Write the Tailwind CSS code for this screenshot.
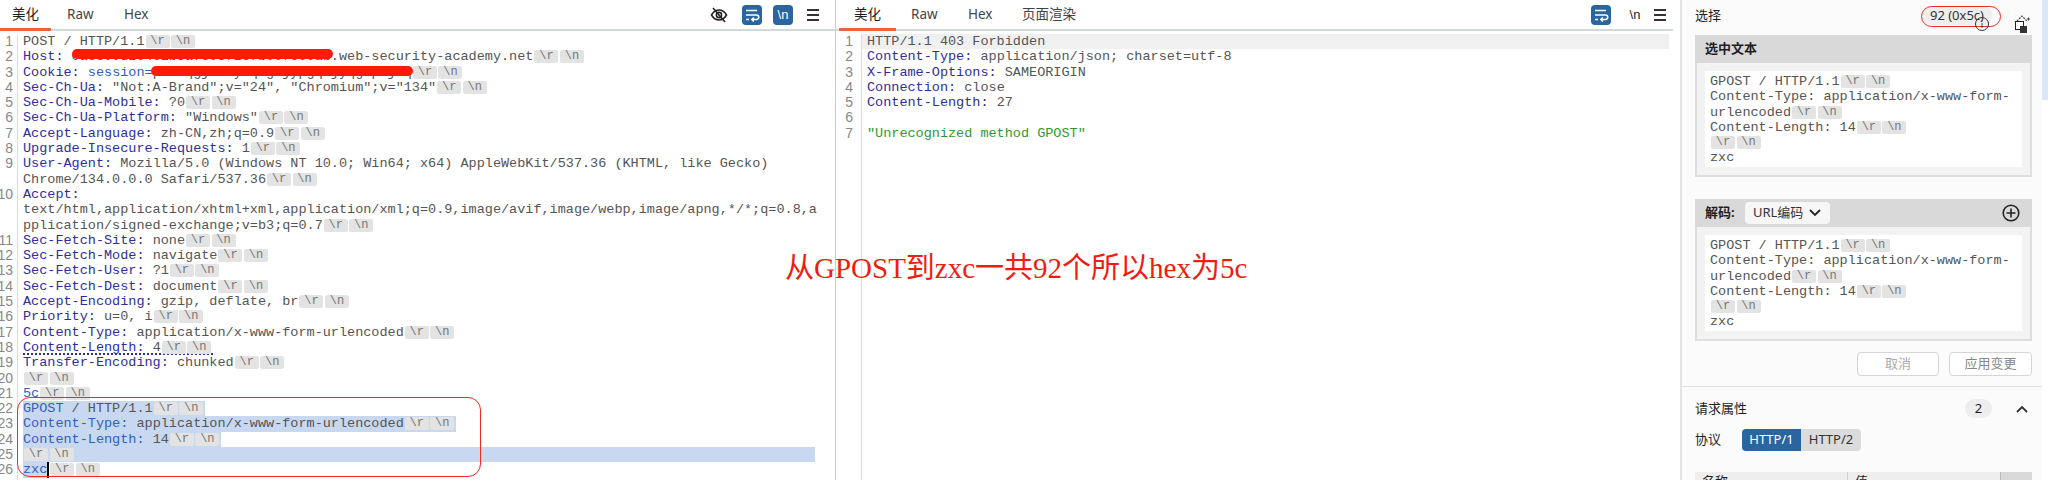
<!DOCTYPE html>
<html lang="en">
<head>
    <meta charset="UTF-8">
    <title>Repeater</title>
    <script src="https://cdn.jsdelivr.net/npm/@tailwindcss/browser@4"></script>
</head>
<body class="bg-white">
    <div class="relative flex w-[2048px] h-[480px] overflow-hidden bg-white text-[#1f1f1f] font-['Noto_Sans','Noto_Sans_CJK_SC',sans-serif]">

        <!-- Request pane -->
        <div class="w-[836px] h-full flex flex-col border-r border-[#c8cdcd] shrink-0">
            <div class="h-[31px] flex items-center border-b-2 border-[#d3d8d8] shrink-0 text-[13.5px] relative">
                <div class="w-[51px] h-[30px] flex items-center justify-center border-b-[3px] border-[#e8643a] -mb-[2px]">美化</div>
                <div class="ml-[16px] w-[26px] text-center text-[#444]">Raw</div>
                <div class="ml-[31px] w-[23px] text-center text-[#444]">Hex</div>
                <div class="ml-auto flex items-center pr-[16px] gap-[11px]">
                    <svg width="18" height="18" viewBox="0 0 18 18" fill="none" stroke="#222" stroke-width="1.6" class="mr-[1px]"><path d="M1.500 9c2-3.400 4.600-5 7.500-5s5.500 1.600 7.500 5c-2 3.400-4.600 5-7.500 5s-5.500-1.600-7.500-5z"/><circle cx="9" cy="9" r="2.600"/><path d="M3 2l12 14"/></svg>
                    <div class="w-[20px] h-[20px] rounded-[4px] bg-[#2a659f] flex items-center justify-center ml-[2px]">
                        <svg width="16" height="16" viewBox="0 0 16 16" fill="none" stroke="#fff" stroke-width="1.500"><path d="M2 3.500h11M2 8h10.500a1.800 1.800 0 0 1 0 4.500H8M9.800 10.500L7.800 12.500l2 2M2 12.500h3"/></svg>
                    </div>
                    <div class="w-[20px] h-[20px] rounded-[4px] bg-[#2a659f] flex items-center justify-center text-white text-[13px] leading-none font-['Liberation_Sans',sans-serif]">\n</div>
                    <div class="w-[12px] ml-[3px] flex flex-col gap-[3px]"><i class="h-[2px] bg-[#333]"></i><i class="h-[2px] bg-[#333]"></i><i class="h-[2px] bg-[#333]"></i></div>
                </div>
            </div>
            <div class="flex-1 flex font-['Liberation_Mono',monospace] text-[13.5px] leading-[15.3px] pt-[3px] text-[#555] overflow-hidden">
                <div class="w-[18px] shrink-0 border-r border-[#d9dcdc] text-[#888] font-['Liberation_Sans',sans-serif] text-[14px] overflow-hidden">
                    <div class="w-[13px] flex flex-col items-end whitespace-nowrap">
                        <span>1</span><span>2</span><span>3</span><span>4</span><span>5</span><span>6</span><span>7</span><span>8</span><span class="mb-[15.3px]">9</span><span class="mb-[30.6px]">10</span><span>11</span><span>12</span><span>13</span><span>14</span><span>15</span><span>16</span><span>17</span><span>18</span><span>19</span><span>20</span><span>21</span><span>22</span><span>23</span><span>24</span><span>25</span><span>26</span>
                    </div>
                </div>
                <div class="flex-1 pl-[5px] [&>div]:whitespace-pre [&>div]:h-[15.3px] [&_b]:font-normal [&_b]:text-[#2b2f9e] [&_i]:not-italic [&_i]:inline-block [&_i]:w-[24px] [&_i]:h-[13px] [&_i]:leading-[13px] [&_i]:mr-[1.500px] [&_i]:text-center [&_i]:text-[12px] [&_i]:bg-[#e3e3e3] [&_i]:text-[#777] [&_i]:rounded-[2px] [&_i]:align-[1px]">
                    <div>POST / HTTP/1.1<i class="ml-[1px]">\r</i><i>\n</i></div>
                    <div><b>Host:</b> 0a8c00d204e1b5a7803f2c7b00f600ab.web-security-academy.net<i class="ml-[1px]">\r</i><i>\n</i></div>
                    <div><b>Cookie:</b> <b class="text-[#2f5fc4]!">session=</b>pY3kqgjZr7yTqLg2jypgqVjyqgWp9jXq<i class="ml-[1px]">\r</i><i>\n</i></div>
                    <div><b>Sec-Ch-Ua:</b> "Not:A-Brand";v="24", "Chromium";v="134"<i class="ml-[1px]">\r</i><i>\n</i></div>
                    <div><b>Sec-Ch-Ua-Mobile:</b> ?0<i class="ml-[1px]">\r</i><i>\n</i></div>
                    <div><b>Sec-Ch-Ua-Platform:</b> "Windows"<i class="ml-[1px]">\r</i><i>\n</i></div>
                    <div><b>Accept-Language:</b> zh-CN,zh;q=0.9<i class="ml-[1px]">\r</i><i>\n</i></div>
                    <div><b>Upgrade-Insecure-Requests:</b> 1<i class="ml-[1px]">\r</i><i>\n</i></div>
                    <div><b>User-Agent:</b> Mozilla/5.0 (Windows NT 10.0; Win64; x64) AppleWebKit/537.36 (KHTML, like Gecko)</div>
                    <div>Chrome/134.0.0.0 Safari/537.36<i class="ml-[1px]">\r</i><i>\n</i></div>
                    <div><b>Accept:</b></div>
                    <div>text/html,application/xhtml+xml,application/xml;q=0.9,image/avif,image/webp,image/apng,*/*;q=0.8,a</div>
                    <div>pplication/signed-exchange;v=b3;q=0.7<i class="ml-[1px]">\r</i><i>\n</i></div>
                    <div><b>Sec-Fetch-Site:</b> none<i class="ml-[1px]">\r</i><i>\n</i></div>
                    <div><b>Sec-Fetch-Mode:</b> navigate<i class="ml-[1px]">\r</i><i>\n</i></div>
                    <div><b>Sec-Fetch-User:</b> ?1<i class="ml-[1px]">\r</i><i>\n</i></div>
                    <div><b>Sec-Fetch-Dest:</b> document<i class="ml-[1px]">\r</i><i>\n</i></div>
                    <div><b>Accept-Encoding:</b> gzip, deflate, br<i class="ml-[1px]">\r</i><i>\n</i></div>
                    <div><b>Priority:</b> u=0, i<i class="ml-[1px]">\r</i><i>\n</i></div>
                    <div><b>Content-Type:</b> application/x-www-form-urlencoded<i class="ml-[1px]">\r</i><i>\n</i></div>
                    <div><span class="inline-block h-[15.3px] border-b-2 border-dotted border-[#2b2f9e]"><b>Content-Length:</b> 4<i class="ml-[1px]">\r</i><i>\n</i></span></div>
                    <div><b>Transfer-Encoding:</b> chunked<i class="ml-[1px]">\r</i><i>\n</i></div>
                    <div><i class="ml-[1px]">\r</i><i>\n</i></div>
                    <div><span class="text-[#2f5fc4]">5c</span><i class="ml-[1px]">\r</i><i>\n</i></div>
                    <div class="w-fit bg-[#c7d8f0]"><b class="text-[#2f5fc4]!">GPOST</b> / HTTP/1.1<i class="ml-[1px]">\r</i><i>\n</i></div>
                    <div class="w-fit bg-[#c7d8f0]"><b class="text-[#2f5fc4]!">Content-Type:</b> application/x-www-form-urlencoded<i class="ml-[1px]">\r</i><i>\n</i></div>
                    <div class="w-fit bg-[#c7d8f0]"><b class="text-[#2f5fc4]!">Content-Length:</b> 14<i class="ml-[1px]">\r</i><i>\n</i></div>
                    <div class="w-[792px] bg-[#c7d8f0]"><i class="ml-[1px]">\r</i><i>\n</i></div>
                    <div><span class="inline-block h-[15.3px] bg-[#c7d8f0] text-[#2f5fc4] border-r-2 border-black">zxc</span><i class="ml-[1px]">\r</i><i>\n</i></div>
                </div>
            </div>
        </div>

        <!-- Response pane -->
        <div class="w-[837px] h-full flex flex-col shrink-0">
            <div class="h-[31px] flex items-center border-b-2 border-[#d3d8d8] shrink-0 text-[13.5px] pl-[3px]">
                <div class="w-[57px] h-[30px] flex items-center justify-center border-b-[3px] border-[#e8643a] -mb-[2px]">美化</div>
                <div class="ml-[15px] w-[26px] text-center text-[#444]">Raw</div>
                <div class="ml-[31px] w-[24px] text-center text-[#444]">Hex</div>
                <div class="ml-[30px] text-[#444]">页面渲染</div>
                <div class="ml-auto flex items-center pr-[7px]">
                    <div class="w-[20px] h-[20px] rounded-[4px] bg-[#2a659f] flex items-center justify-center">
                        <svg width="16" height="16" viewBox="0 0 16 16" fill="none" stroke="#fff" stroke-width="1.500"><path d="M2 3.500h11M2 8h10.500a1.800 1.800 0 0 1 0 4.500H8M9.800 10.500L7.800 12.500l2 2M2 12.500h3"/></svg>
                    </div>
                    <div class="w-[20px] ml-[14px] text-center text-[13px] leading-none font-['Liberation_Sans',sans-serif]">\n</div>
                    <div class="w-[12px] ml-[9px] flex flex-col gap-[3px]"><i class="h-[2px] bg-[#333]"></i><i class="h-[2px] bg-[#333]"></i><i class="h-[2px] bg-[#333]"></i></div>
                </div>
            </div>
            <div class="flex-1 flex font-['Liberation_Mono',monospace] text-[13.5px] leading-[15.3px] pt-[3px] text-[#555]">
                <div class="w-[26px] shrink-0 border-r border-[#d9dcdc] flex flex-col items-end pr-[8px] text-[#888] font-['Liberation_Sans',sans-serif] text-[14px]">
                    <span>1</span><span>2</span><span>3</span><span>4</span><span>5</span><span>6</span><span>7</span>
                </div>
                <div class="flex-1 mr-[4px] [&>div]:whitespace-pre [&>div]:h-[15.3px] [&>div]:pl-[5px] [&_b]:font-normal [&_b]:text-[#2b2f9e]">
                    <div class="bg-[#f0f0f0]">HTTP/1.1 403 Forbidden</div>
                    <div><b>Content-Type:</b> application/json; charset=utf-8</div>
                    <div><b>X-Frame-Options:</b> SAMEORIGIN</div>
                    <div><b>Connection:</b> close</div>
                    <div><b>Content-Length:</b> 27</div>
                    <div></div>
                    <div class="text-[#2e9a2e]">"Unrecognized method GPOST"</div>
                </div>
            </div>
        </div>

        <!-- Inspector -->
        <div class="w-[375px] h-full flex shrink-0">
            <div class="w-[7px] shrink-0 bg-white"></div>
            <div class="w-[362px] h-full bg-[#fbfbfb] border-l-2 border-[#e4e4e4] text-[13px] flex flex-col shrink-0">
                <div class="h-[35px] flex items-center pl-[13px] pr-[10px] shrink-0">
                    <span class="-mt-[3px]">选择</span>
                    <span class="ml-auto mr-[40px] h-[19px] px-[8px] rounded-full bg-[#eeeeee] text-[#333] flex items-center -mt-[4px]">92 (0x5c)</span>
                </div>
                <div class="ml-[13px] mr-[10px] border-2 border-t-0 border-[#dedede] bg-[#f3f3f3] shrink-0">
                    <div class="h-[28px] bg-[#d9d9d9] -mx-[2px] px-[10px] flex items-center font-bold">选中文本</div>
                    <div class="mx-[8px] my-[8px] pl-[5px] py-[3px] h-[96px] bg-white font-['Liberation_Mono',monospace] text-[13.5px] leading-[15.3px] text-[#555] whitespace-pre [&_i]:not-italic [&_i]:inline-block [&_i]:w-[24px] [&_i]:h-[13px] [&_i]:leading-[13px] [&_i]:mr-[1.500px] [&_i]:text-center [&_i]:text-[12px] [&_i]:bg-[#e3e3e3] [&_i]:text-[#777] [&_i]:rounded-[2px] [&_i]:align-[1px]">GPOST / HTTP/1.1<i class="ml-[1px]">\r</i><i>\n</i>
Content-Type: application/x-www-form-
urlencoded<i class="ml-[1px]">\r</i><i>\n</i>
Content-Length: 14<i class="ml-[1px]">\r</i><i>\n</i>
<i class="ml-[1px]">\r</i><i>\n</i>
zxc</div>
                </div>
                <div class="ml-[13px] mr-[10px] mt-[22px] border-2 border-t-0 border-[#dedede] bg-[#f3f3f3] shrink-0">
                    <div class="h-[28px] bg-[#d9d9d9] -mx-[2px] px-[10px] flex items-center">
                        <span class="font-bold">解码:</span>
                        <span class="ml-[10px] h-[22px] w-[85px] rounded-[4px] bg-[#f6f6f6] text-[#333] flex items-center justify-center gap-[6px]">URL编码
                            <svg width="12" height="8" viewBox="0 0 12 8" fill="none" stroke="#222" stroke-width="1.800"><path d="M1 1l5 5 5-5"/></svg>
                        </span>
                        <svg class="ml-auto mr-[2px]" width="18" height="18" viewBox="0 0 18 18" fill="none" stroke="#222" stroke-width="1.600"><circle cx="9" cy="9" r="7.800"/><path d="M9 4.500v9M4.500 9h9"/></svg>
                    </div>
                    <div class="mx-[8px] my-[8px] pl-[5px] py-[3px] h-[96px] bg-white font-['Liberation_Mono',monospace] text-[13.5px] leading-[15.3px] text-[#555] whitespace-pre [&_i]:not-italic [&_i]:inline-block [&_i]:w-[24px] [&_i]:h-[13px] [&_i]:leading-[13px] [&_i]:mr-[1.500px] [&_i]:text-center [&_i]:text-[12px] [&_i]:bg-[#e3e3e3] [&_i]:text-[#777] [&_i]:rounded-[2px] [&_i]:align-[1px]">GPOST / HTTP/1.1<i class="ml-[1px]">\r</i><i>\n</i>
Content-Type: application/x-www-form-
urlencoded<i class="ml-[1px]">\r</i><i>\n</i>
Content-Length: 14<i class="ml-[1px]">\r</i><i>\n</i>
<i class="ml-[1px]">\r</i><i>\n</i>
zxc</div>
                </div>
                <div class="ml-[13px] mr-[10px] mt-[11px] flex justify-end gap-[10px] shrink-0">
                    <div class="w-[82px] h-[24px] rounded-[4px] border border-[#d5d5d5] bg-white flex items-center justify-center text-[#aaa]">取消</div>
                    <div class="w-[83px] h-[24px] rounded-[4px] border border-[#d5d5d5] bg-white flex items-center justify-center text-[#888]">应用变更</div>
                </div>
                <div class="mt-[10px] border-t border-[#dfdfdf] h-[0px] shrink-0"></div>
                <div class="h-[43px] flex items-center pl-[13px] pr-[14px] shrink-0">
                    <span>请求属性</span>
                    <span class="ml-auto w-[27px] h-[19px] rounded-full bg-[#eeeeee] text-center leading-[19px]">2</span>
                    <svg class="ml-[24px]" width="12" height="8" viewBox="0 0 12 8" fill="none" stroke="#333" stroke-width="1.800"><path d="M1 7l5-5 5 5"/></svg>
                </div>
                <div class="flex items-center pl-[13px] shrink-0 -mt-[1px]">
                    <span class="w-[47px]">协议</span>
                    <div class="flex h-[22px] rounded-[4px] overflow-hidden">
                        <div class="w-[59px] bg-[#2a659f] text-white flex items-center justify-center">HTTP/1</div>
                        <div class="w-[60px] bg-[#dcdcdc] text-[#333] flex items-center justify-center">HTTP/2</div>
                    </div>
                </div>
                <div class="ml-[13px] mr-[10px] mt-[21px] h-[20px] flex bg-[#eeeeee] shrink-0">
                    <div class="w-[153px] border-r border-[#cfcfcf] pl-[7px]">名称</div>
                    <div class="flex-1 pl-[7px]">值</div>
                    <div class="w-[32px] bg-[#d9d9d9] border-l border-[#bbb] flex justify-center pt-[9px]"><i class="w-[11px] h-[2px] bg-[#555]"></i></div>
                </div>
            </div>
            <div class="w-[6px] shrink-0"><div class="h-[100px] bg-[#dce7f7]"></div></div>
        </div>

        <!-- Annotations drawn over the screenshot -->
        <div class="absolute left-[72px] top-[49px] w-[261px] h-[10px] rounded-full bg-[#ff1a0a]"></div>
        <div class="absolute left-[151px] top-[66px] w-[262px] h-[10px] rounded-full bg-[#ff1a0a]"></div>
        <div class="absolute left-[17px] top-[397px] w-[464px] h-[80px] rounded-[13px] border-[1.500px] border-[#f02a20]"></div>
        <div class="absolute left-[1921px] top-[6px] w-[80px] h-[21px] rounded-full border-[1.500px] border-[#f02a20]"></div>
        <div class="absolute left-[1975px] top-[17px] w-[14px] h-[14px] rounded-full border border-[#333] flex items-center justify-center text-[9px] leading-none">i</div>
        <svg class="absolute left-[2014px] top-[12px]" width="16" height="22" viewBox="0 0 16 22" fill="none"><path d="M3 9l5-5 5 5" stroke="#444" stroke-width="1.200" stroke-dasharray="2 1"/><path d="M13 7h3M14.500 5.500v3" stroke="#444"/><rect x="1.500" y="9.500" width="8" height="8" fill="#fff" stroke="#222"/><rect x="6" y="14" width="7" height="7" fill="#333"/></svg>
        <div class="absolute left-[785px] top-[250px] whitespace-nowrap text-[29px] leading-[36px] text-[#f01c10] font-['Liberation_Serif','Noto_Sans_CJK_SC',serif]">从GPOST到zxc一共92个所以hex为5c</div>
    </div>
</body>
</html>
